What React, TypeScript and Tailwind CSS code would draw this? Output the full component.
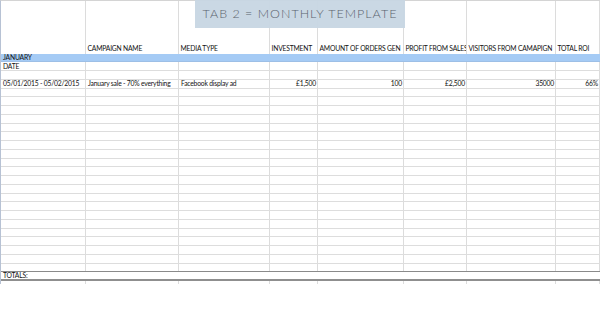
const cols = [85, 93, 91, 48, 86, 63, 89, 44];

const widthClass = [
  'w-[85px]',
  'w-[93px]',
  'w-[91px]',
  'w-[48px]',
  'w-[86px]',
  'w-[63px]',
  'w-[89px]',
  'w-[44px]',
];

// the header is cut by the next filled cell in the sheet, so keep the visible part
const headers = [
  '',
  'CAMPAIGN NAME',
  'MEDIA TYPE',
  'INVESTMENT',
  'AMOUNT OF ORDERS GEN',
  'PROFIT FROM SALES',
  'VISITORS FROM CAMAPIGN',
  'TOTAL ROI',
];

const dataRow = [
  { text: '05/01/2015 - 05/02/2015', right: false },
  { text: 'January sale - 70% everything', right: false },
  { text: 'Facebook display ad', right: false },
  { text: '£1,500', right: true },
  { text: '100', right: true },
  { text: '£2,500', right: true },
  { text: '35000', right: true },
  { text: '66%', right: true },
];

function Row({
  cells,
  className = '',
}: {
  cells?: { text: string; right: boolean }[];
  className?: string;
}) {
  return (
    <div className={`flex h-[8.75px] border-b border-[#dddddd] ${className}`}>
      {cols.map((_, i) => {
        const cell = cells?.[i];
        return (
          <div
            key={i}
            className={`${widthClass[i]} shrink-0 h-full border-r border-[#dcdcdc] overflow-hidden whitespace-nowrap flex items-center ${
              cell?.right ? 'justify-end pr-[1px]' : 'pl-[2px]'
            }`}
          >
            {cell?.text}
          </div>
        );
      })}
    </div>
  );
}

export default function App() {
  const emptyRows = Array.from({ length: 21 });

  return (
    <div
      className="relative w-[600px] h-[313px] bg-white text-[#111111] text-[6.75px] tracking-[-0.2px] leading-none overflow-hidden"
      style={{ fontFamily: 'Lato, "Open Sans", sans-serif' }}
    >
      {/* Title banner */}
      <div className="absolute left-[195px] top-0 w-[210px] h-[28px] bg-[#c7d6e3]/95 flex items-center justify-center z-10">
        <span className="text-[12.5px] tracking-[1px] text-[#5a636d] font-light pt-[1px]">
          TAB 2 = MONTHLY TEMPLATE
        </span>
      </div>

      <div className="border-t border-[#d4d4d4] border-l border-l-[#b7c2d4] w-[600px]">
        {/* Header row */}
        <div className="flex h-[52.5px]">
          {headers.map((h, i) => (
            <div
              key={i}
              className={`${widthClass[i]} shrink-0 h-full border-r border-[#dcdcdc] overflow-hidden whitespace-nowrap flex items-end pl-[1.5px] pb-[1.5px]`}
            >
              {h}
            </div>
          ))}
        </div>

        {/* Month band */}
        <div className="h-[8.75px] bg-[#a5cbf5] border-b border-[#9dbfe6] flex items-center pl-[2px]">
          JANUARY
        </div>

        <Row cells={[{ text: 'DATE', right: false }]} />
        <Row />
        <Row cells={dataRow} />
        {emptyRows.map((_, i) => (
          <Row key={i} className={i === emptyRows.length - 1 ? 'border-b-[#8a8a8a]' : ''} />
        ))}

        {/* Totals */}
        <div className="flex h-[9px] border-b-[2px] border-[#8f8f8f]">
          <div className="w-[85px] shrink-0 flex items-center pl-[2px]">TOTALS:</div>
        </div>
        <div className="flex h-[3px]">
          {cols.map((_, i) => (
            <div key={i} className={`${widthClass[i]} shrink-0 h-full border-r border-[#dcdcdc]`} />
          ))}
        </div>
      </div>
    </div>
  );
}
